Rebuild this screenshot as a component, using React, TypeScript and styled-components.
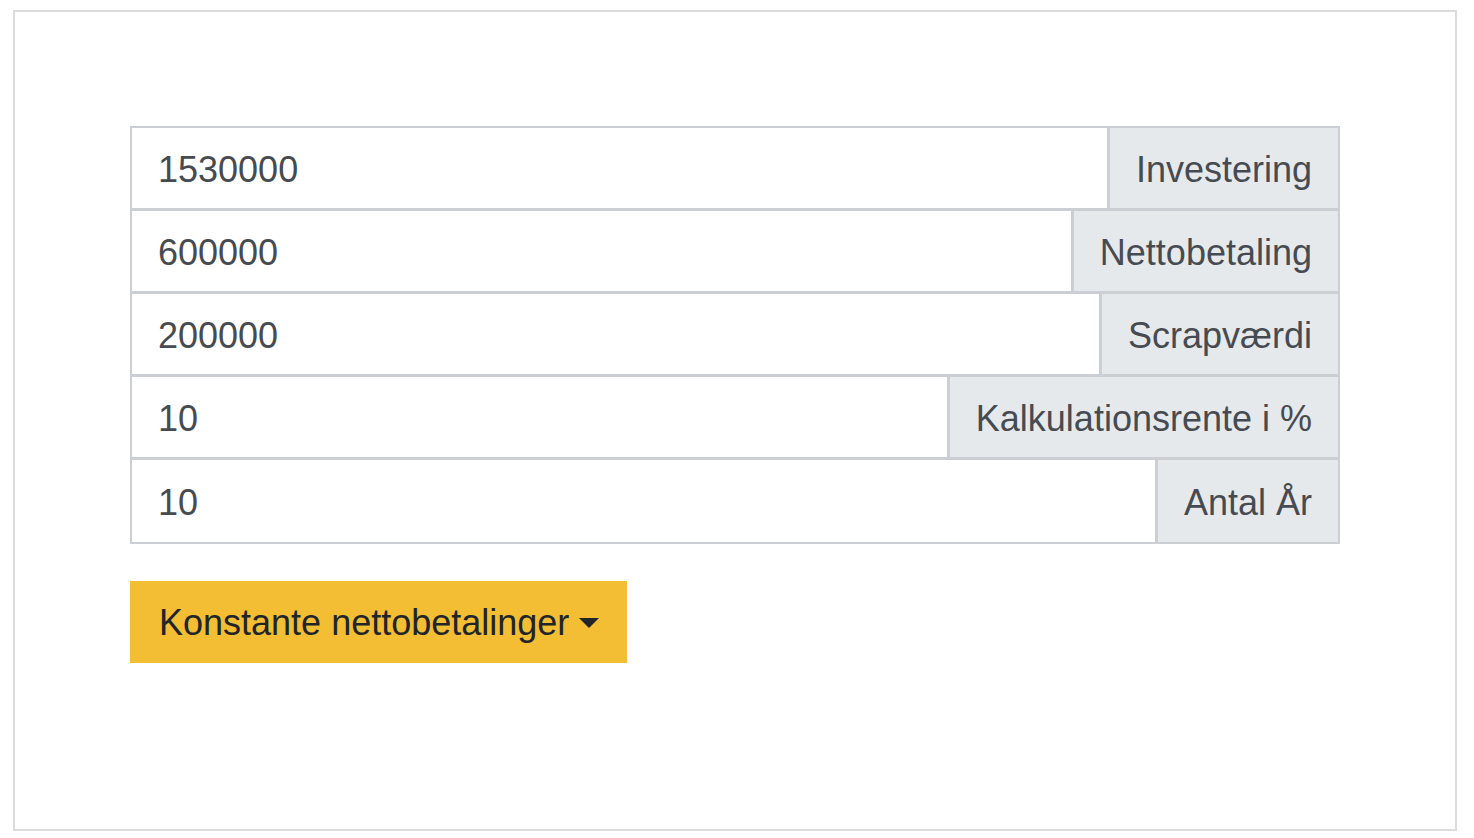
import React, { useState } from "react";
import styled, { createGlobalStyle } from "styled-components";

const GlobalStyle = createGlobalStyle`
  html, body {
    margin: 0;
    padding: 0;
    background: #fff;
  }
  body {
    font-family: "Liberation Sans", Arial, sans-serif;
  }
`;

type Field = {
  label: string;
  value: string;
};

const fields: Field[] = [
  { label: "Investering", value: "1530000" },
  { label: "Nettobetaling", value: "600000" },
  { label: "Scrapværdi", value: "200000" },
  { label: "Kalkulationsrente i %", value: "10" },
  { label: "Antal År", value: "10" },
];

export default function App() {
  const [values, setValues] = useState(fields.map((f) => f.value));

  return (
    <>
      <GlobalStyle />
      <Frame>
        <FieldList>
          {fields.map((f, i) => (
            <InputGroup key={f.label}>
              <TextInput
                value={values[i]}
                onChange={(e) => {
                  const next = [...values];
                  next[i] = e.target.value;
                  setValues(next);
                }}
              />
              <Addon>{f.label}</Addon>
            </InputGroup>
          ))}
        </FieldList>
        <DropdownButton>Konstante nettobetalinger</DropdownButton>
      </Frame>
    </>
  );
}

const Frame = styled.div`
  box-sizing: border-box;
  margin: 10px 17px 0 13px;
  height: 821px;
  border: 2px solid #dcdcdc;
  padding: 114px 115px 0 115px;
`;

const FieldList = styled.div`
  display: flex;
  flex-direction: column;
`;

const InputGroup = styled.div`
  display: flex;
  height: 84px;
  & + & {
    margin-top: -1px;
  }
  &:last-child {
    height: 86px;
  }
`;

const TextInput = styled.input`
  flex: 1;
  min-width: 0;
  box-sizing: border-box;
  border: 2px solid #cbcfd4;
  border-right-width: 1px;
  outline: none;
  padding: 3px 26px 0 26px;
  font-family: "Liberation Sans", Arial, sans-serif;
  font-size: 36px;
  color: #464b51;
  background: #fff;
`;

const Addon = styled.div`
  display: flex;
  align-items: center;
  box-sizing: border-box;
  border: 2px solid #cbcfd4;
  padding: 3px 26px 0 26px;
  background: #e6e9ec;
  color: #464b51;
  font-size: 36px;
  white-space: nowrap;
`;

const DropdownButton = styled.button`
  display: inline-flex;
  align-items: center;
  margin-top: 37px;
  height: 82px;
  padding: 1px 28px 0 29px;
  border: none;
  border-radius: 0;
  background: #f3bd34;
  color: #212529;
  font-family: "Liberation Sans", Arial, sans-serif;
  font-size: 36px;
  cursor: pointer;
  &::after {
    content: "";
    display: inline-block;
    margin-left: 10px;
    border-top: 10px solid #212529;
    border-left: 10px solid transparent;
    border-right: 10px solid transparent;
  }
`;
